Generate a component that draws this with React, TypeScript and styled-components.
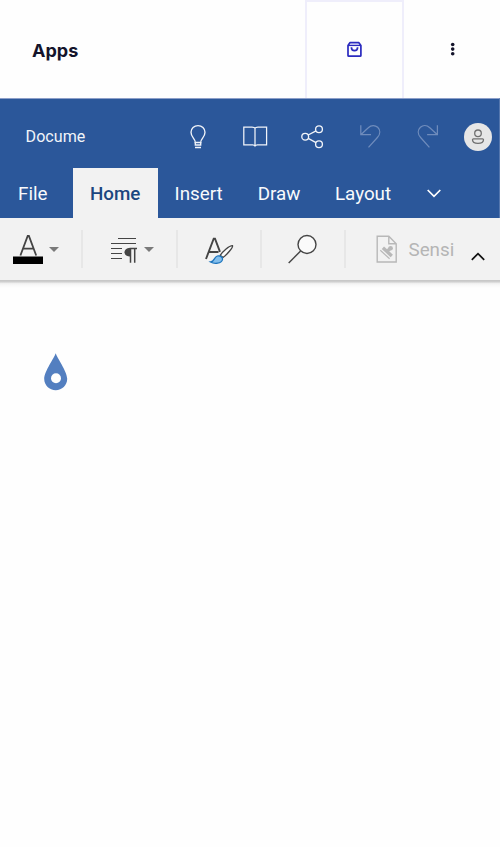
import React from "react";
import styled, { createGlobalStyle } from "styled-components";

const GlobalStyle = createGlobalStyle`
  * { box-sizing: border-box; }
  body { margin: 0; background: #fefefe; overflow: hidden; }
  svg { display: block; flex: none; }
`;

const Page = styled.div`
  width: 500px;
  height: 847px;
  display: flex;
  flex-direction: column;
  background: #fefefe;
  font-family: Roboto, "Liberation Sans", sans-serif;
`;

const SiteHeader = styled.header`
  height: 98px;
  display: grid;
  grid-template-columns: 305px 99px 96px;
`;

const SiteTitle = styled.h1`
  margin: 0;
  padding: 3px 0 0 32px;
  align-self: center;
  font: 700 18px/24px Inter, sans-serif;
  letter-spacing: 0;
  color: #14142b;
`;

const HeaderCell = styled.div<{ $framed?: boolean }>`
  display: flex;
  align-items: center;
  justify-content: center;
  border: 0 solid #efeefb;
  border-width: ${(p) => (p.$framed ? "2px 2px 0" : "0")};
`;

const Ribbon = styled.section`
  height: 120px;
  background: #2b579a;
  border-top: 1px solid #8c9fc9;
  border-right: 1px solid #5577ae;
`;

const TitleRow = styled.div`
  height: 69px;
  padding: 7px 0 0 25.6px;
  display: grid;
  grid-template-columns: 143.4px repeat(5, 57.5px) 43px;
  align-items: center;
`;

const DocTitle = styled.div`
  font-size: 16.1px;
  line-height: 20px;
  color: #f1f4f9;
`;

const IconCell = styled.div<{ $muted?: boolean }>`
  display: flex;
  justify-content: center;
  color: ${(p) => (p.$muted ? "#6f8cbc" : "#f1f4f9")};
`;

const Avatar = styled.div`
  width: 28px;
  height: 28px;
  margin-left: 7.5px;
  border-radius: 50%;
  background: #e6e6e6;
  color: #707070;
`;

const TabRow = styled.nav`
  height: 50px;
  display: grid;
  grid-template-columns: 73px 84.6px 83.2px 77.2px 93px 47px;
  align-items: stretch;
`;

const Tab = styled.div<{ $active?: boolean; $indent: number }>`
  padding: 1px 0 0 ${(p) => p.$indent}px;
  display: flex;
  align-items: center;
  font-size: 18.8px;
  font-weight: ${(p) => (p.$active ? 500 : 400)};
  color: ${(p) => (p.$active ? "#1b4680" : "#f8fafc")};
  background: ${(p) => (p.$active ? "#f2f2f2" : "transparent")};
`;

const TabChevron = styled.div`
  display: flex;
  align-items: center;
  justify-content: center;
  color: #ffffff;
`;

const ToolBar = styled.div`
  height: 62px;
  display: grid;
  grid-template-columns: 81px 95px 84px 84px 112px 44px;
  background: #f2f2f2;
`;

const Tool = styled.div<{ $indent: number; $divided?: boolean }>`
  padding-left: ${(p) => p.$indent}px;
  display: flex;
  align-items: center;
  background: ${(p) =>
    p.$divided ? "linear-gradient(#e7e7e7, #e7e7e7) 0 12px / 2px 38px no-repeat" : "none"};
`;

const ToolLabel = styled.span`
  margin-left: 10.5px;
  padding-top: 1px;
  font-size: 18.8px;
  color: #b5b5b5;
`;

const Caret = styled.span<{ $gap: number }>`
  margin-left: ${(p) => p.$gap}px;
  border: 5px solid transparent;
  border-top-color: #7a7a7a;
  border-bottom: 0;
`;

const ToolbarEdge = styled.div`
  height: 8px;
  background: linear-gradient(#c8c8c8 0 1px, #cecece 1px 2px, #ededed 3px, #f8f8f8 5px, #fefefe 8px);
`;

const Canvas = styled.main`
  flex: 1;
  padding: 65px 0 0 44px;
`;

type IconProps = { size?: number; children: React.ReactNode; stroke?: number };

const LineIcon = ({ size = 28, children, stroke = 1.25 }: IconProps) => (
  <svg
    width={size}
    height={size}
    viewBox={`0 0 ${size} ${size}`}
    fill="none"
    stroke="currentColor"
    strokeWidth={stroke}
  >
    {children}
  </svg>
);

export default function App() {
  return (
    <Page>
      <GlobalStyle />
      <SiteHeader>
        <SiteTitle>Apps</SiteTitle>
        <HeaderCell $framed>
          <svg width="17" height="18" viewBox="0 0 17 18" fill="none" stroke="#2a2abf" strokeWidth="1.7">
            <path d="M2 4.4 3.9 1.7H12.9L14.9 4.4V14.4Q14.9 15.2 14.1 15.2H2.8Q2 15.2 2 14.4Z" strokeLinejoin="round" />
            <path d="M2 4.4H14.9" strokeWidth="1.4" />
            <path d="M5.4 6.2C5.4 10.7 11.6 10.7 11.6 6.2" />
          </svg>
        </HeaderCell>
        <HeaderCell>
          <svg width="6" height="14" viewBox="0 0 6 14" fill="#14142b">
            <circle cx="3.7" cy="2.5" r="1.8" />
            <circle cx="3.7" cy="7.1" r="1.8" />
            <circle cx="3.7" cy="11.7" r="1.8" />
          </svg>
        </HeaderCell>
      </SiteHeader>

      <Ribbon>
        <TitleRow>
          <DocTitle>Docume</DocTitle>
          <IconCell>
            <LineIcon stroke={1.35}>
              <path d="M11.3 19.5C11.3 15.5 7 14.6 7 9.3C7 5.3 10.1 2.6 14 2.6S21 5.3 21 9.3C21 14.6 16.7 15.5 16.7 19.5Z" />
              <path d="M11.3 19V22H16.7V19M11 24.5H17" />
            </LineIcon>
          </IconCell>
          <IconCell>
            <LineIcon>
              <path d="M14 5.2C13.5 4.2 12.5 4 11 4H2.8V21.8H11.6C13 21.8 13.5 22.1 14 23C14.5 22.1 15 21.8 16.4 21.8H25.6V4H17C15.5 4 14.5 4.2 14 5.2ZM14 5.2V23" />
            </LineIcon>
          </IconCell>
          <IconCell>
            <LineIcon stroke={1.35}>
              <circle cx="6.2" cy="13.7" r="3.4" />
              <circle cx="20" cy="6.2" r="3.4" />
              <circle cx="20" cy="21.2" r="3.4" />
              <path d="M9.2 12 17 7.9M9.2 15.3 17 19.6" />
            </LineIcon>
          </IconCell>
          <IconCell $muted>
            <LineIcon>
              <path d="M4.8 2.2V11.7H15M4.8 11.7 12.3 4.7C15.3 1.7 19.3 2 21.7 4.3C24.4 7 24.6 11 21.4 14.5L12.5 24.3" />
            </LineIcon>
          </IconCell>
          <IconCell $muted>
            <LineIcon>
              <path d="M23.4 2.2V11.7H13.1M23.4 11.7 15.8 4.7C12.6 1.7 8.8 2 6.4 4.3C3.6 7 3.4 11 6.6 14.5L15.4 24.3" />
            </LineIcon>
          </IconCell>
          <Avatar>
            <LineIcon stroke={1.3}>
              <circle cx="14" cy="10.3" r="3.3" />
              <path d="M9.4 15.8H18.6Q19.5 15.8 19.5 16.8C19.5 19 17.2 20.4 14 20.4S8.5 19 8.5 16.8Q8.5 15.8 9.4 15.8Z" />
            </LineIcon>
          </Avatar>
        </TitleRow>
        <TabRow>
          <Tab $indent={18}>File</Tab>
          <Tab $indent={17} $active>Home</Tab>
          <Tab $indent={17}>Insert</Tab>
          <Tab $indent={17}>Draw</Tab>
          <Tab $indent={17}>Layout</Tab>
          <TabChevron>
            <svg width="16" height="10" viewBox="0 0 16 10" fill="none" stroke="currentColor" strokeWidth="1.7">
              <path d="M1.7 2 8 8.3 14.3 2" />
            </svg>
          </TabChevron>
        </TabRow>
      </Ribbon>

      <ToolBar>
        <Tool $indent={13}>
          <svg width="30" height="32" viewBox="0 0 30 32" fill="none">
            <path d="M7.4 22.5 14.7 3H15.9L23.2 22.5M10 15.6H20.6" stroke="#444" strokeWidth="1.8" />
            <rect y="23.5" width="30" height="7.5" fill="#000" />
          </svg>
          <Caret $gap={6} />
        </Tool>
        <Tool $indent={29} $divided>
          <svg width="28" height="32" viewBox="0 0 28 32" fill="none" stroke="#444" strokeWidth="1.2">
            <path d="M8 5.5H26M1 10.5H26M1 15.5H12M1 20.5H12M1 25.5H12" />
            <path d="M19.5 15.6H27M20.5 15V29.8M24.7 15V29.8" strokeWidth="1.5" />
            <path d="M20.5 14.9C12.5 14.5 12.5 24 20.5 23.5Z" fill="#444" stroke="none" />
          </svg>
          <Caret $gap={5.7} />
        </Tool>
        <Tool $indent={28} $divided>
          <svg width="30" height="32" viewBox="0 0 30 32" fill="none" stroke="#444">
            <path d="M2 26 9.7 5.6H11L16 18.8M5 19H14.5" strokeWidth="1.9" />
            <path d="M16.2 22.3C18.2 19 25 12.6 28.5 12.6C29.5 13.8 22.9 21.8 19 24.5Z" strokeWidth="1.3" fill="#fafafa" />
            <path d="M6.5 29C10.8 28.6 9.5 24.3 13.3 23C16 22.2 19 24.2 18.5 26.5C17.7 30.7 10.3 31.2 6.5 29Z" stroke="#1e75bd" strokeWidth="1.3" fill="#83beec" />
          </svg>
        </Tool>
        <Tool $indent={27} $divided>
          <svg width="30" height="32" viewBox="0 0 30 32" fill="none" stroke="#444" strokeWidth="1.4">
            <circle cx="20" cy="11.5" r="9" fill="#fafafa" />
            <path d="M13.6 18 1.7 30" />
          </svg>
        </Tool>
        <Tool $indent={32} $divided>
          <svg width="22" height="30" viewBox="0 0 22 30" fill="none" stroke="#b8b8b8" strokeWidth="1.4">
            <path d="M1.2 2.2H12.8L20.2 9.8V28H1.2ZM12.8 2.2V9.8H20.2" />
            <path d="M6.9 13.8 15.8 22" strokeWidth="3.4" />
            <path d="M4.3 16.3 13.6 24.8" strokeWidth="1.2" />
            <path d="M11 17.3 14 14.5" strokeWidth="3.2" />
            <circle cx="14.6" cy="14.2" r="2.3" fill="#b8b8b8" stroke="none" />
          </svg>
          <ToolLabel>Sensi</ToolLabel>
        </Tool>
        <Tool $indent={14}>
          <svg width="16" height="32" viewBox="0 0 16 32" fill="none" stroke="#111" strokeWidth="1.7">
            <path d="M1.8 26.8 8 20.6 14.2 26.8" />
          </svg>
        </Tool>
      </ToolBar>
      <ToolbarEdge />

      <Canvas>
        <svg width="24" height="38" viewBox="0 0 24 38">
          <path
            d="M11.7 0.2C12.8 4.2 23.2 18.5 23.2 25.8C23.2 32.5 18 37.2 11.7 37.2S0.2 32.5 0.2 25.8C0.2 18.5 10.6 4.2 11.7 0.2Z"
            fill="#537fc0"
          />
          <circle cx="12" cy="25.3" r="5" fill="#fefefe" />
        </svg>
      </Canvas>
    </Page>
  );
}
